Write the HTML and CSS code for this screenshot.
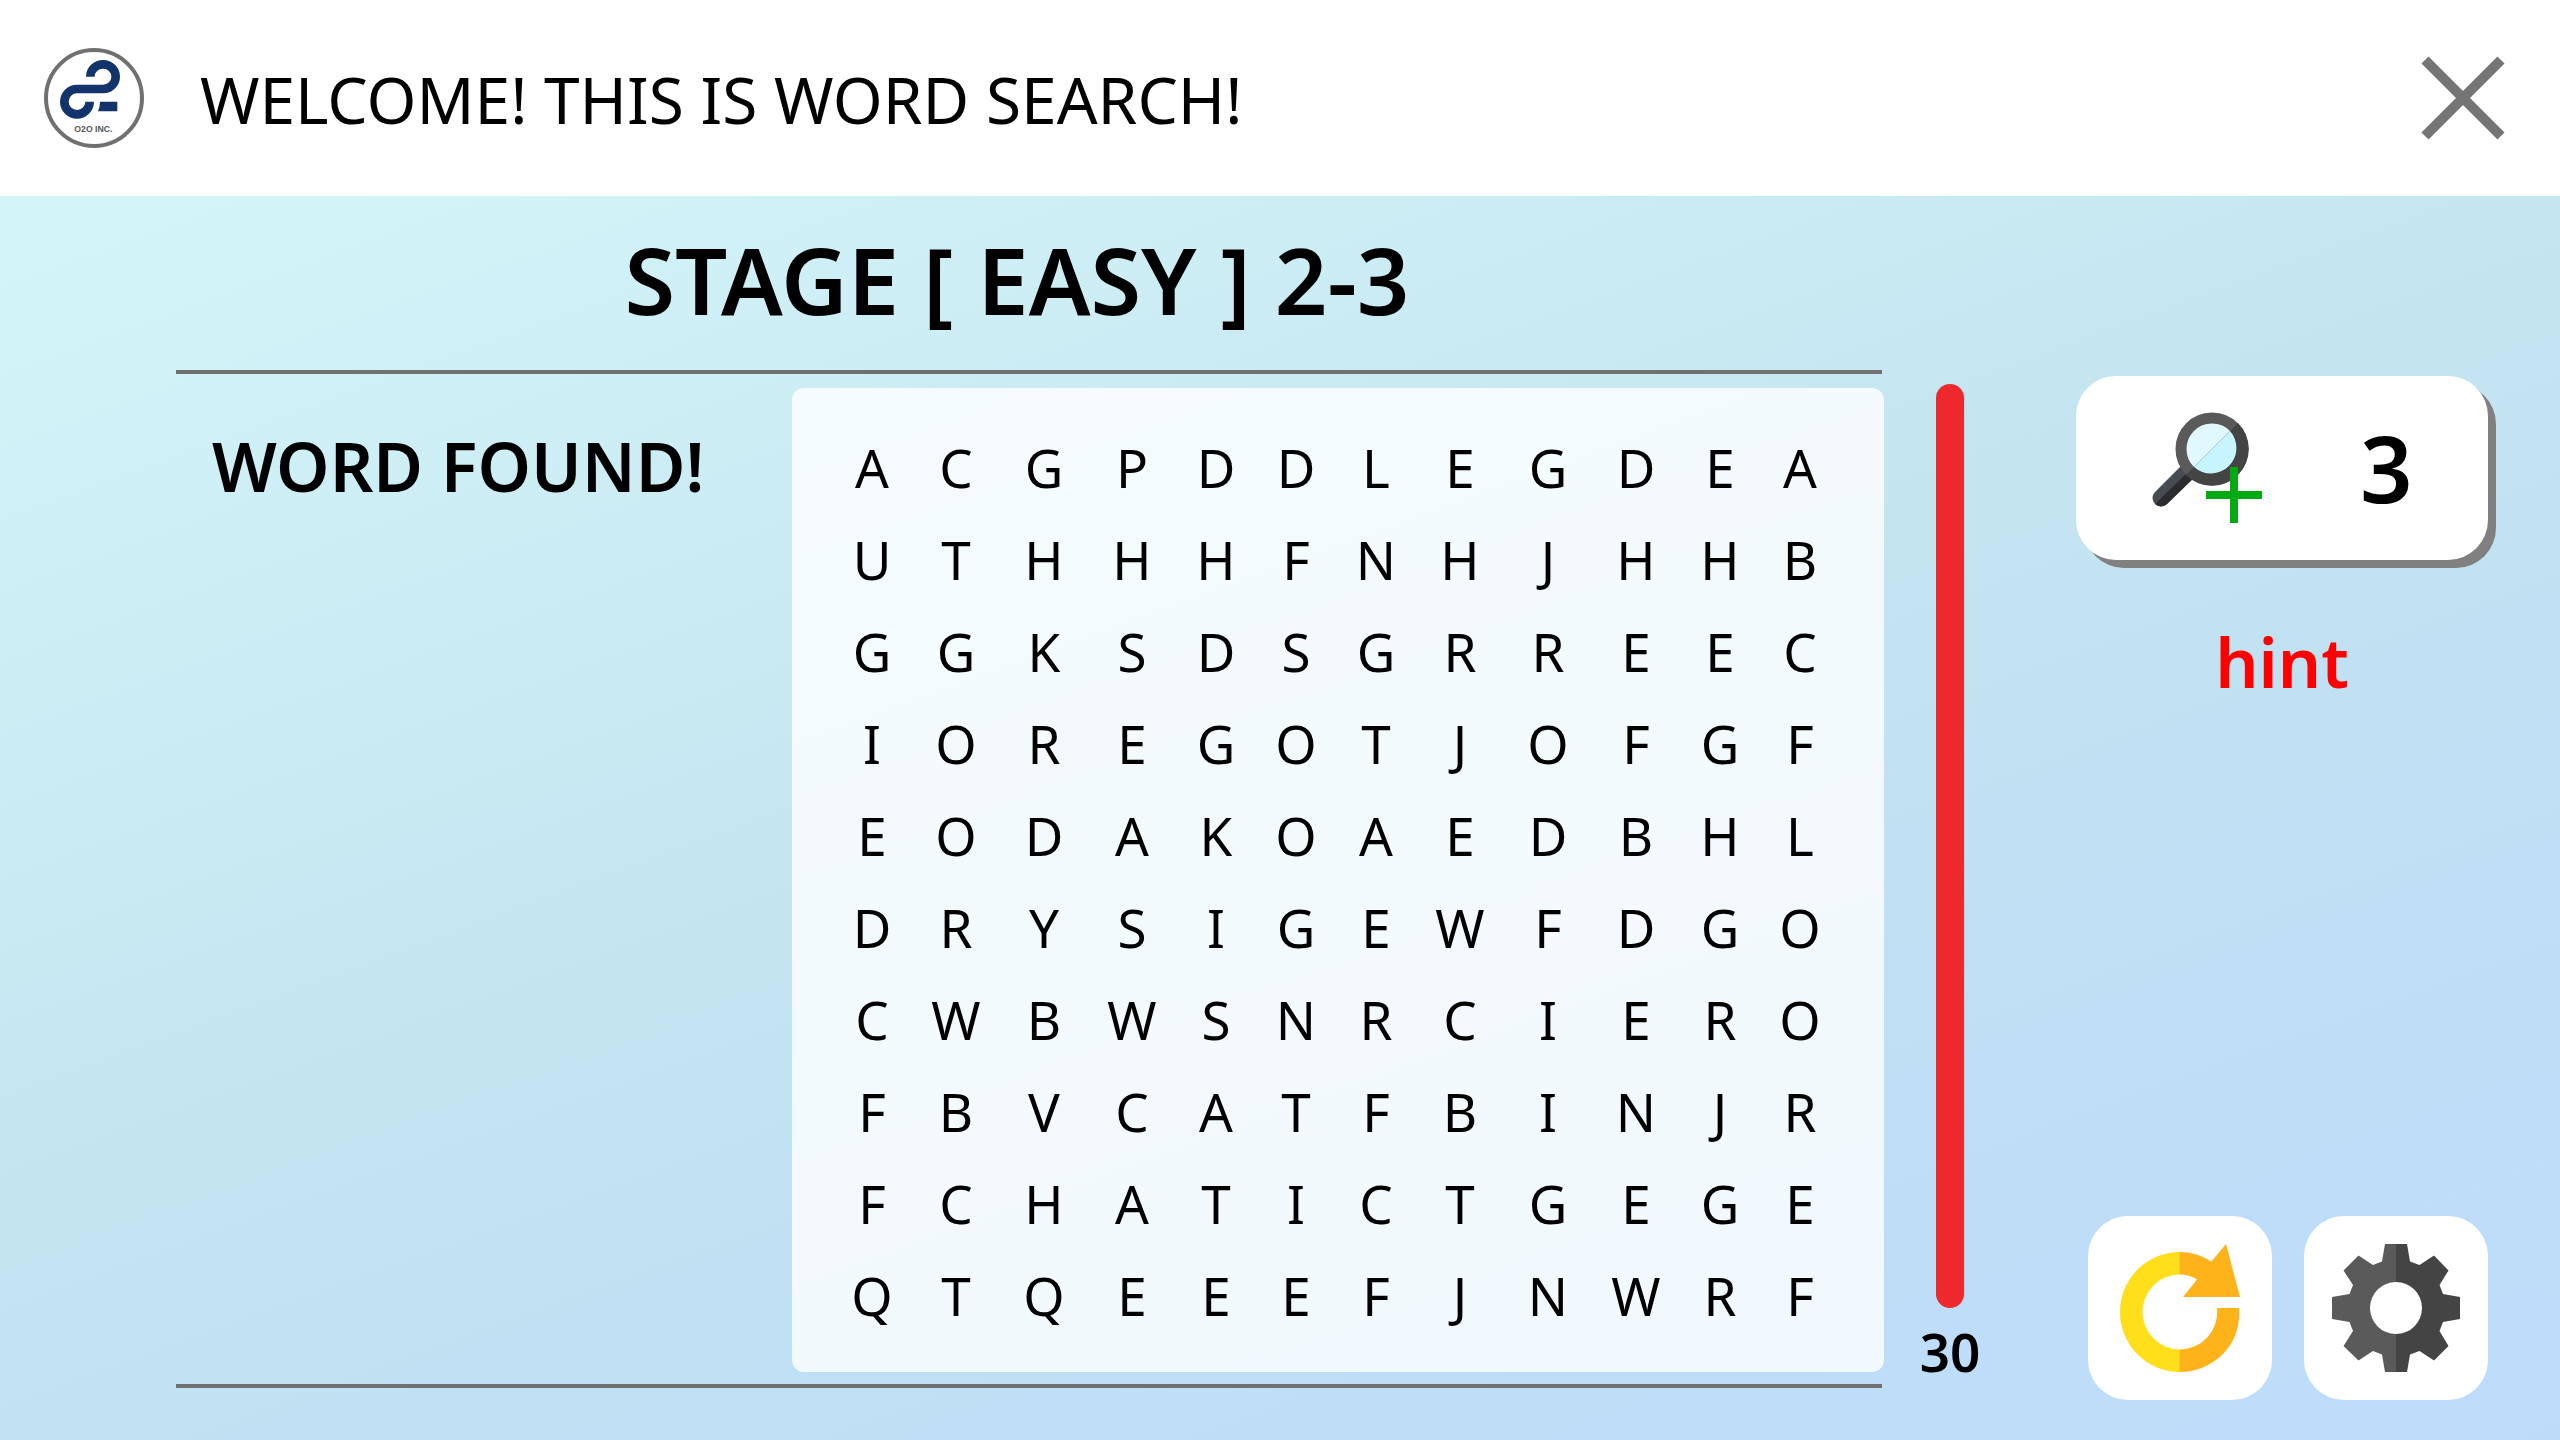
FILE: index.html
```html
<!DOCTYPE html>
<html lang="en">
<head>
<meta charset="utf-8">
<meta name="viewport" content="width=device-width, initial-scale=1">
<title>Word Search</title>
<link rel="stylesheet" href="styles.css">
</head>
<body>
<header class="topbar">
  <svg class="logo" viewBox="0 0 150 150" role="img" aria-label="O2O Inc.">
    <circle cx="75" cy="75" r="72" fill="#fff" stroke="#707070" stroke-width="6"/>
    <path d="M69.500 43A19 18.500 0 1 1 88.500 61.500H49.500A19 19 0 1 0 68.500 80.500" fill="none" stroke="#12336b" stroke-width="13"/>
    <path d="M84 80.500h26v14.500H81q3-7 3-14.500z" fill="#12336b"/>
    <text class="logo-text" x="74" y="126" text-anchor="middle">O2O INC.</text>
  </svg>
  <p class="welcome">WELCOME! THIS IS WORD SEARCH!</p>
  <button class="close" type="button" aria-label="Close">
    <svg viewBox="0 0 84 84"><path d="M4 4l76 76M80 4L4 80" stroke="#757575" stroke-width="10"/></svg>
  </button>
</header>
<main class="game">
  <section class="play">
    <h1 class="stage">STAGE [ EASY ] 2-3</h1>
    <div class="board">
      <h2 class="found">WORD FOUND!</h2>
      <div class="panel">
        <table class="letters">
          <colgroup><col class="narrow"><col class="wide" span="3"><col class="narrow" span="3"><col class="wide" span="3"><col class="narrow" span="2"></colgroup>
          <tbody>
            <tr><td>A</td><td>C</td><td>G</td><td>P</td><td>D</td><td>D</td><td>L</td><td>E</td><td>G</td><td>D</td><td>E</td><td>A</td></tr>
            <tr><td>U</td><td>T</td><td>H</td><td>H</td><td>H</td><td>F</td><td>N</td><td>H</td><td>J</td><td>H</td><td>H</td><td>B</td></tr>
            <tr><td>G</td><td>G</td><td>K</td><td>S</td><td>D</td><td>S</td><td>G</td><td>R</td><td>R</td><td>E</td><td>E</td><td>C</td></tr>
            <tr><td>I</td><td>O</td><td>R</td><td>E</td><td>G</td><td>O</td><td>T</td><td>J</td><td>O</td><td>F</td><td>G</td><td>F</td></tr>
            <tr><td>E</td><td>O</td><td>D</td><td>A</td><td>K</td><td>O</td><td>A</td><td>E</td><td>D</td><td>B</td><td>H</td><td>L</td></tr>
            <tr><td>D</td><td>R</td><td>Y</td><td>S</td><td>I</td><td>G</td><td>E</td><td>W</td><td>F</td><td>D</td><td>G</td><td>O</td></tr>
            <tr><td>C</td><td>W</td><td>B</td><td>W</td><td>S</td><td>N</td><td>R</td><td>C</td><td>I</td><td>E</td><td>R</td><td>O</td></tr>
            <tr><td>F</td><td>B</td><td>V</td><td>C</td><td>A</td><td>T</td><td>F</td><td>B</td><td>I</td><td>N</td><td>J</td><td>R</td></tr>
            <tr><td>F</td><td>C</td><td>H</td><td>A</td><td>T</td><td>I</td><td>C</td><td>T</td><td>G</td><td>E</td><td>G</td><td>E</td></tr>
            <tr><td>Q</td><td>T</td><td>Q</td><td>E</td><td>E</td><td>E</td><td>F</td><td>J</td><td>N</td><td>W</td><td>R</td><td>F</td></tr>
          </tbody>
        </table>
      </div>
    </div>
  </section>
  <div class="timer">
    <div class="timer-bar"></div>
    <span class="timer-value">30</span>
  </div>
  <aside class="tools">
    <button class="hint" type="button" aria-label="Use a hint, 3 left">
      <svg class="lens" viewBox="0 0 110 112">
        <path d="M34 61L9 86" stroke="#474c54" stroke-width="17" stroke-linecap="round"/>
        <path d="M3 92a8.500 8.500 0 0 0 12 0L41 67l-6-6z" fill="#2b2b30"/>
        <circle cx="60" cy="37" r="31" fill="#e0f9ff" stroke="#5a5a5a" stroke-width="11"/>
        <path d="M86 11A36.500 36.500 0 0 1 34 63z" fill="#444"/>
        <path d="M78 19A25.500 25.500 0 0 1 42 55z" fill="#c6f4ff"/>
        <path d="M54 83h56M82 55v56" stroke="#00ab12" stroke-width="8"/>
      </svg>
      <span class="hint-count">3</span>
    </button>
    <p class="hint-label">hint</p>
    <div class="actions">
      <button class="action" type="button" aria-label="Restart">
        <svg viewBox="0 0 184 184">
          <path d="M92 36A60 60 0 0 0 92 156V133.500A37.500 37.500 0 0 1 92 58.500z" fill="#ffde1a"/>
          <path d="M91.500 36Q109 36 123.500 45.500L138 28L152 81H95L109 63.500Q101 58.500 91.500 58.500zM129 92H151Q153 120 134.500 138.500Q116 156 91.500 156V133.500A37.500 37.500 0 0 0 129 92z" fill="#ffb31a"/>
        </svg>
      </button>
      <button class="action" type="button" aria-label="Settings">
        <svg viewBox="0 0 184 184">
          <path d="M92 28H81L78 45.500L69 49L54.500 39.500L39.500 54.500L49 69L45.500 78L28 81V103L45.500 106L49 115L39.500 130L54.500 144.500L69 135L78 138.500L81 156H92V118A26 26 0 0 1 92 66z" fill="#5a5a5a"/>
          <path d="M92 28H103L106 45.500L115.500 49L130 39.500L144.500 54.500L135.500 69L139 78L156 81V103L139 106L135.500 115L144.500 130L130 144.500L115.500 135L106 138.500L103 156H92V118A26 26 0 0 0 92 66z" fill="#444"/>
        </svg>
      </button>
    </div>
  </aside>
</main>
</body>
</html>
```
FILE: styles.css
```css
* { box-sizing: border-box; }

body {
  margin: 0;
  min-height: 100vh;
  display: flex;
  flex-direction: column;
  font-family: "Noto Sans", sans-serif;
  color: #000;
}

h1, h2, p { margin: 0; }

button {
  padding: 0;
  border: 0;
  background: none;
  font: inherit;
  color: inherit;
  cursor: pointer;
}

svg { display: block; }

.topbar {
  display: flex;
  align-items: center;
  height: 196px;
  padding: 0 55px 0 44px;
  background: #fff;
}

.logo { width: 100px; height: 100px; }

.logo-text {
  font: bold 13px "Liberation Sans", sans-serif;
  fill: #555;
}

.welcome {
  flex: 1;
  margin-left: 56px;
  padding-top: 4px;
  font-size: 64px;
  line-height: 88px;
}

.close svg { width: 84px; height: 84px; }

.game {
  flex: 1;
  display: flex;
  padding: 0 72px 40px 176px;
  background: linear-gradient(160deg, #d4f5f8 0%, #c3e4f0 50%, #c0e1f3 62%, #bedef7 78%, #bcdcfa 100%);
}

.play {
  flex: 1;
  display: flex;
  flex-direction: column;
}

.stage {
  height: 174px;
  padding: 20px 26px 0 0;
  font-size: 92px;
  font-weight: 600;
  line-height: 128px;
  text-align: center;
}

.board {
  display: flex;
  justify-content: space-between;
  margin-right: 2px;
  padding: 14px 0 12px;
  border: solid #707070;
  border-width: 4px 0;
}

.found {
  padding: 32px 0 0 36px;
  font-size: 68px;
  font-weight: 600;
  line-height: 92px;
}

.panel {
  margin-right: -2px;
  padding: 34px 44px 30px 40px;
  border-radius: 12px;
  background: rgba(255, 255, 255, 0.8);
}

.letters {
  table-layout: fixed;
  width: 1008px;
  border-collapse: collapse;
}

.narrow { width: 80px; }
.wide { width: 88px; }

.letters td {
  height: 92px;
  padding: 0;
  font-size: 53px;
  line-height: 92px;
  text-align: center;
}

.timer {
  display: flex;
  flex-direction: column;
  align-items: center;
  width: 132px;
  padding-top: 188px;
}

.timer-bar {
  width: 28px;
  height: 924px;
  border-radius: 14px;
  background: #ed292d;
}

.timer-value {
  margin-top: 8px;
  font-size: 53px;
  font-weight: 600;
  line-height: 72px;
}

.tools {
  display: flex;
  flex-direction: column;
  align-items: center;
  width: 412px;
  margin-left: 60px;
  padding-top: 180px;
}

.hint {
  display: flex;
  align-items: center;
  width: 412px;
  height: 184px;
  padding-left: 76px;
  border-radius: 40px;
  background: #fff;
  box-shadow: 8px 8px 0 #808080;
}

.lens { width: 110px; height: 112px; }

.hint-count {
  margin-left: 98px;
  font-size: 92px;
  font-weight: 600;
  line-height: 128px;
}

.hint-label {
  margin-top: 56px;
  font-size: 68px;
  font-weight: 600;
  line-height: 92px;
  color: #f00;
}

.actions {
  display: flex;
  gap: 32px;
  margin-top: auto;
  align-self: flex-end;
}

.action {
  width: 184px;
  height: 184px;
  border-radius: 40px;
  background: #fff;
}
```
